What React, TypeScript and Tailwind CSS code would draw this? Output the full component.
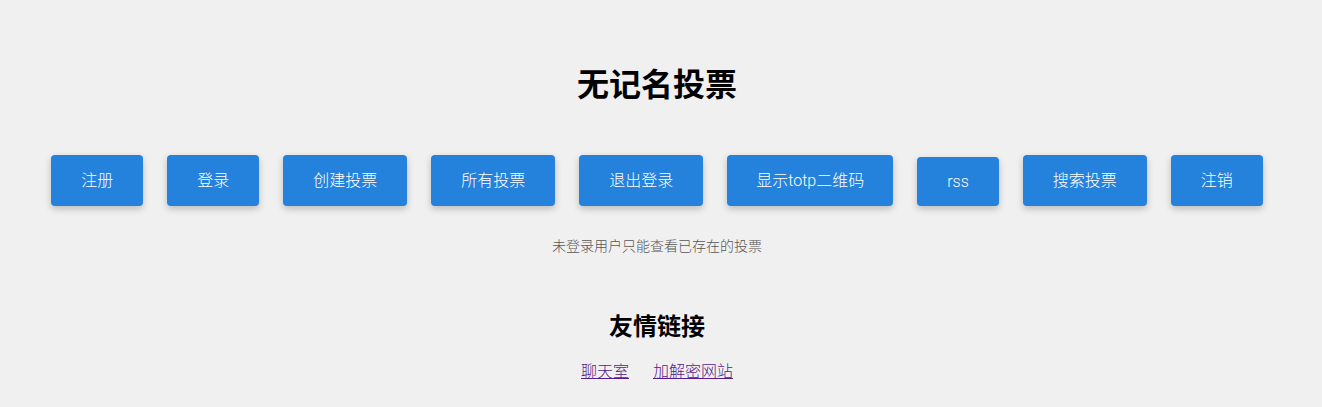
import React from "react";

const buttons = [
  { label: "注册", cls: "h-[51px] px-[30px]" },
  { label: "登录", cls: "h-[51px] px-[30px]" },
  { label: "创建投票", cls: "h-[51px] px-[30px]" },
  { label: "所有投票", cls: "h-[51px] px-[30px]" },
  { label: "退出登录", cls: "h-[51px] px-[30px]" },
  { label: "显示totp二维码", cls: "h-[51px] px-[29px]" },
  { label: "rss", cls: "h-[49px] px-[30px]" },
  { label: "搜索投票", cls: "h-[51px] px-[30px]" },
  { label: "注销", cls: "h-[51px] px-[30px]" },
];

export default function App() {
  return (
    <div
      className="w-[1322px] h-[407px] bg-[#f0f0f0] overflow-hidden"
      style={{ fontFamily: 'Roboto, "Noto Sans CJK SC", "Noto Sans", sans-serif' }}
    >
      <div className="w-[1314px] flex flex-col items-center pt-[65px]">
        <h1 className="text-[32px] leading-[40px] font-bold text-black">无记名投票</h1>
        <div className="mt-[50px] flex items-end gap-[24px]">
          {buttons.map((b) => (
            <button
              key={b.label}
              className={`${b.cls} rounded-[4px] bg-[#2481dc] text-white text-[16px] leading-[20px] font-light shadow-[0_3px_7px_rgba(0,0,0,0.22)] flex items-center justify-center whitespace-nowrap`}
            >
              {b.label}
            </button>
          ))}
        </div>
        <p className="mt-[30px] text-[14px] leading-[20px] font-light text-[#555555]">未登录用户只能查看已存在的投票</p>
        <h2 className="mt-[55px] text-[24px] leading-[32px] font-bold text-black">友情链接</h2>
        <div className="mt-[17px] flex gap-[24px] text-[16px] leading-[24px] font-light">
          <a href="#" className="text-[#551a8b] underline">聊天室</a>
          <a href="#" className="text-[#551a8b] underline">加解密网站</a>
        </div>
      </div>
    </div>
  );
}
